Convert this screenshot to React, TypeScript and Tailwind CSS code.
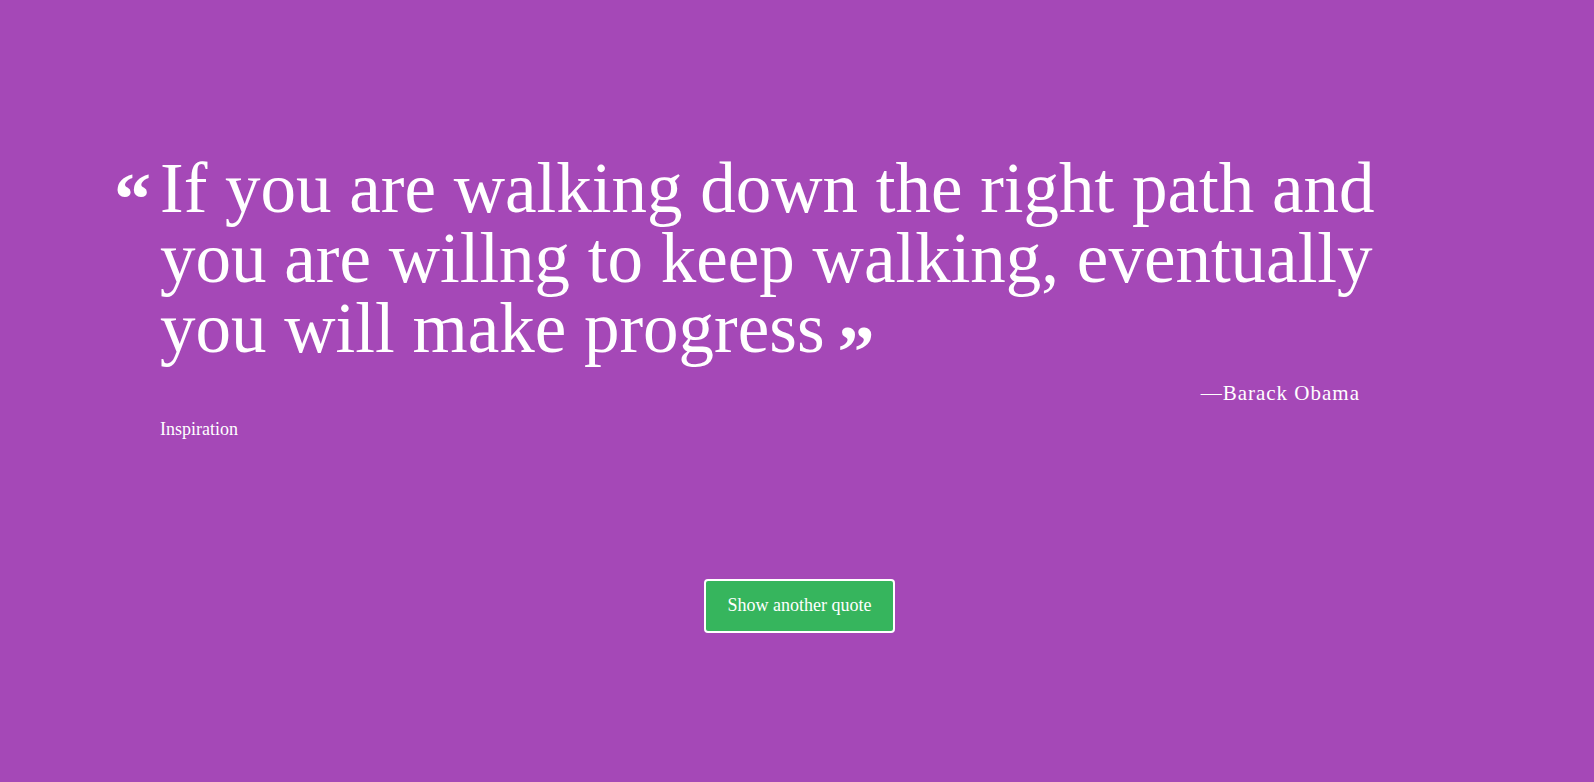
export default function App() {
  const quote = {
    text: "If you are walking down the right path and you are willng to keep walking, eventually you will make progress",
    author: "Barack Obama",
    tag: "Inspiration",
  };

  return (
    <div className="min-h-screen w-full bg-[#a548b7] text-white font-['Liberation_Serif',serif]">
      {/* Quote */}
      <div className="pt-[153px] pl-[114px]">
        <div className="flex">
          <span className="w-[46px] shrink-0 text-[74px] font-bold leading-[92px]">“</span>
          <div className="w-[1232px]">
            <blockquote className="text-[71px] leading-[70px]">
              {quote.text}
              <span className="ml-[13px] inline-block translate-y-[25px] text-[74px] font-bold leading-[40px]">”</span>
            </blockquote>
            <p className="mt-[15px] mr-[32px] text-right text-[21px] tracking-[1px]">—{quote.author}</p>
            <p className="mt-[6px] text-[18px]">{quote.tag}</p>
          </div>
        </div>
      </div>

      {/* Button */}
      <div className="mt-[136px] flex justify-center">
        <button className="ml-[5px] h-[54px] w-[191px] rounded-[4px] border-2 border-white bg-[#36b55d] text-[18px] text-white">
          Show another quote
        </button>
      </div>
    </div>
  );
}
